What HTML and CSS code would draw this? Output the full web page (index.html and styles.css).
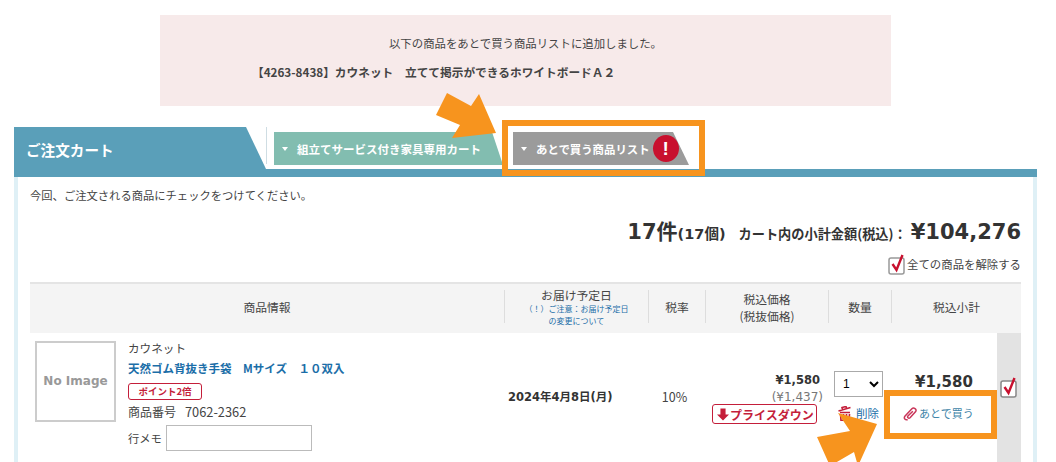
FILE: index.html
```html
<!DOCTYPE html>
<html lang="ja">
<head>
  <meta charset="UTF-8">
  <title>ご注文カート</title>
  <link rel="stylesheet" href="styles.css">
</head>
<body>
  <section class="notice">
    <p class="notice-main">以下の商品をあとで買う商品リストに追加しました。</p>
    <p class="notice-item">【4263-8438】カウネット　立てて掲示ができるホワイトボードＡ２</p>
  </section>

  <section class="cart">
    <div class="tabs">
      <h1 class="tab-title">ご注文カート</h1>
      <div class="tab-links">
        <a class="tab tab-green"><i class="caret"></i>組立てサービス付き家具専用カート</a>
        <a class="tab tab-gray"><i class="caret"></i>あとで買う商品リスト<b class="alert">!</b></a>
      </div>
    </div>

    <div class="panel">
      <p class="intro">今回、ご注文される商品にチェックをつけてください。</p>
      <div class="total">
        <span class="total-count">17件</span><span class="total-qty">(17個)</span>
        <span class="total-label">カート内の小計金額(税込)：</span>
        <span class="total-price">¥104,276</span>
      </div>
      <div class="release">
        <svg class="check-icon" viewBox="0 0 18 22"><rect x="1" y="5" width="15" height="16" rx="2" fill="#fff" stroke="#999" stroke-width="1.5"/><path d="M4.5 11 L8.5 17 L14.5 2" fill="none" stroke="#c8102e" stroke-width="2.4"/></svg>
        全ての商品を解除する
      </div>

      <table class="items">
        <colgroup>
          <col class="c-info"><col class="c-date"><col class="c-rate"><col class="c-price"><col class="c-qty"><col class="c-sub"><col class="c-check">
        </colgroup>
        <thead>
          <tr>
            <th><div class="th-in">商品情報</div></th>
            <th><div class="th-in">お届け予定日<a class="th-note">（！）ご注意：お届け予定日<br>の変更について</a></div></th>
            <th><div class="th-in">税率</div></th>
            <th><div class="th-in">税込価格<br>(税抜価格)</div></th>
            <th><div class="th-in">数量</div></th>
            <th colspan="2"><div class="th-in th-last">税込小計</div></th>
          </tr>
        </thead>
        <tbody>
          <tr>
            <td class="td-info">
              <div class="product">
                <div class="noimage">No Image</div>
                <div class="product-text">
                  <div class="maker">カウネット</div>
                  <a class="product-name">天然ゴム背抜き手袋　Mサイズ　１０双入</a>
                  <div><span class="point">ポイント2倍</span></div>
                  <div class="code">商品番号<span class="code-no">7062-2362</span></div>
                  <label class="memo">行メモ<input type="text"></label>
                </div>
              </div>
            </td>
            <td class="td-date">2024年4月8日(月)</td>
            <td class="td-rate">10%</td>
            <td class="td-price">
              <div class="price">¥1,580</div>
              <div class="price-ex">(¥1,437)</div>
              <span class="down">
                <svg viewBox="0 0 14 14"><path d="M4 0 H10 V7 H14 L7 14 L0 7 H4 Z" fill="#c41e3a"/></svg>プライスダウン
              </span>
            </td>
            <td class="td-qty">
              <select class="qty"><option>1</option></select>
              <a class="del">
                <svg viewBox="0 0 14 15"><path d="M0.5 5 L12.5 1.5 M4.5 3.5 L4 1.5 L8 .5 L8.5 2.5 M2 6.5 H12 M2.5 8 L3 14.5 H11 L11.5 8 M5.5 8 V14 M8.5 8 V14" fill="none" stroke="#c41e3a" stroke-width="1.6"/></svg>削除
              </a>
            </td>
            <td class="td-sub">
              <div class="sub-price">¥1,580</div>
              <a class="later">
                <svg viewBox="0 0 16 16"><path d="M5 14.5 C2.5 15.5 .5 13 2 11 L9.5 3 C11.5 1 15 3.5 13.5 6 L7.5 12.5 C6 14 4 12 5.5 10.5 L10.5 5.5" fill="none" stroke="#c9365a" stroke-width="1.6"/></svg>あとで買う
              </a>
            </td>
            <td class="td-check">
              <svg class="check-icon" viewBox="0 0 18 22"><rect x="1" y="5" width="15" height="16" rx="2" fill="#fff" stroke="#888" stroke-width="1.5"/><path d="M4.5 11 L8.5 17 L14.5 2" fill="none" stroke="#c8102e" stroke-width="2.4"/></svg>
            </td>
          </tr>
        </tbody>
      </table>
    </div>
  </section>

  <!-- 注釈（スクリーンショットに重ねた枠と矢印） -->
  <div class="mark mark-tab"></div>
  <div class="mark mark-later"></div>
  <svg class="arrows" viewBox="0 0 1056 462">
    <polygon points="447,93 471,106 479,94 496,133 452,138 460,125 436,115" fill="#f7941e"/>
    <polygon points="877,424 838,413 850,431 817,437 830,466 854,452 858,466" fill="#f7941e"/>
  </svg>
</body>
</html>
```

FILE: styles.css
```css
:root {
  --blue: #5a9fb9;
  --link: #1b6ea8;
  --red: #c41e3a;
  --orange: #f7941e;
  --text: #444;
}
* { box-sizing: border-box; margin: 0; padding: 0; }
html, body { height: 462px; overflow: hidden; }
body {
  position: relative;
  font-family: "Noto Sans CJK JP", "Noto Sans", sans-serif;
  font-size: 12px;
  color: var(--text);
  background: #fff;
}

/* notice */
.notice {
  width: 731px;
  height: 91px;
  margin: 15px 0 0 160px;
  padding-top: 19px;
  background: #f7eaea;
}
.notice-main { text-align: center; font-size: 11.4px; line-height: 18px; }
.notice-item { margin: 11px 0 0 92px; font-size: 11.7px; line-height: 18px; font-weight: 700; }

/* tabs */
.cart { width: 1023px; margin: 21px 0 0 14px; }
.tabs { display: flex; height: 50px; border-bottom: 8px solid var(--blue); }
.tab-title {
  width: 252px;
  padding: 14px 0 0 12px;
  background: var(--blue);
  color: #fff;
  font-size: 14.6px;
  line-height: 18px;
  font-weight: 700;
  clip-path: polygon(0 0, 232px 0, 100% 100%, 0 100%);
}
.tab-links { display: flex; flex: 1; padding: 5px 0 0 7px; border-left: 1px solid #cfdde3; height: 37px; }
.tab {
  display: flex;
  align-items: center;
  height: 33px;
  color: #fff;
  font-weight: 700;
}
.tab-green {
  width: 229px;
  padding-left: 8px;
  font-size: 11.5px;
  background: #82bdb0;
  clip-path: polygon(0 0, 218px 0, 100% 100%, 0 100%);
}
.tab-gray {
  width: 176px;
  margin-left: 10px;
  padding-left: 8px;
  font-size: 11.4px;
  background: #9b9b9b;
  clip-path: polygon(0 0, 160px 0, 100% 100%, 0 100%);
}
.caret {
  width: 0;
  height: 0;
  margin-right: 9px;
  border: 3px solid transparent;
  border-top: 4px solid #fff;
  border-bottom: 0;
}
.alert {
  width: 26px;
  height: 27px;
  margin-left: 3px;
  border-radius: 50%;
  background: #c8102e;
  font: 700 19px/27px "Liberation Sans", sans-serif;
  text-align: center;
}

/* panel */
.panel {
  height: 300px;
  padding: 9px 12px 0;
  border-left: 4px solid #dff0f6;
  border-right: 4px solid #dff0f6;
}
.intro { font-size: 11.3px; line-height: 18px; }
.total {
  display: flex;
  justify-content: flex-end;
  align-items: baseline;
  margin-top: 11px;
  height: 37px;
  color: #333;
  font-family: "DejaVu Sans", "Noto Sans CJK JP", sans-serif;
  font-weight: 700;
}
.total-count { font-size: 21px; }
.total-qty { font-size: 14.5px; margin-right: 13px; }
.total-label { font-family: "Noto Sans CJK JP", sans-serif; font-size: 13.2px; margin-right: 4px; }
.total-price { font-size: 21px; }
.release {
  display: flex;
  justify-content: flex-end;
  align-items: center;
  height: 24px;
  font-size: 11.4px;
}
.check-icon { width: 18px; height: 22px; margin-right: 1px; }

/* table */
.items { width: 991px; margin-top: 6px; table-layout: fixed; border-collapse: collapse; }
.c-info { width: 474px; }
.c-date { width: 144px; }
.c-rate { width: 57px; }
.c-price { width: 123px; }
.c-qty { width: 63px; }
.c-sub { width: 106px; }
.c-check { width: 24px; }
th {
  height: 50px;
  padding: 6px 0 10px;
  background: #f4f4f4;
  border-top: 2px solid #e4e4e4;
  font-size: 11.8px;
  font-weight: 400;
  line-height: 17px;
}
.th-in { display: flex; flex-direction: column; justify-content: center; height: 33px; border-left: 1px solid #ddd; }
th:first-child .th-in { border-left: 0; }
.th-note { display: block; font-size: 8px; line-height: 12px; color: var(--link); }
td { height: 140px; vertical-align: top; }

.product { display: flex; padding: 8px 0 0 5px; }
.noimage {
  width: 81px;
  height: 81px;
  border: 2px solid #ccc;
  color: #999;
  font: 700 12px/77px "DejaVu Sans", sans-serif;
  text-align: center;
}
.product-text { margin-left: 12px; }
.maker { font-size: 11.6px; line-height: 16px; margin-top: -1px; }
.product-name { display: block; margin-top: 4px; line-height: 16px; color: var(--link); font-size: 11.5px; font-weight: 700; }
.point {
  display: inline-block;
  margin-top: 7px;
  width: 74px;
  height: 17px;
  border: 1.5px solid var(--red);
  border-radius: 3px;
  color: var(--red);
  font-size: 9.5px;
  font-weight: 700;
  line-height: 14px;
  text-align: center;
  vertical-align: top;
}
.code { margin-top: 3px; line-height: 18px; }
.code-no { margin-left: 9px; font-size: 12.8px; }
.memo { display: flex; align-items: center; margin-top: 4px; font-size: 11.3px; }
.memo input { width: 146px; height: 26px; margin-left: 4px; border: 1.5px solid #bbb; background: #fff; }

.td-date { padding: 55px 0 0 4px; font-family: "DejaVu Sans", "Noto Sans CJK JP", sans-serif; font-size: 11.5px; font-weight: 700; color: #333; }
.td-rate { padding: 54px 4px 0 0; text-align: center; font-size: 12.5px; }
.td-price { padding: 38px 8px 0 0; text-align: right; }
.price { font: 700 11.5px/18px "DejaVu Sans", sans-serif; color: #333; }
.price-ex { font: 12px/16px "DejaVu Sans", sans-serif; color: #777; margin-right: -3px; }
.down {
  display: inline-flex;
  align-items: center;
  width: 105px;
  height: 20px;
  margin: -1px 3px 0 0;
  padding-left: 4px;
  border: 1.5px solid var(--red);
  border-radius: 3px;
  color: var(--red);
  font-size: 12px;
  font-weight: 700;
  white-space: nowrap;
}
.down svg { width: 12px; height: 13px; margin-right: 1px; }
.td-qty { padding: 38px 0 0 6px; }
.qty { width: 49px; height: 26px; padding-left: 4px; border: 1.5px solid #aaa; background: #fff; font-size: 12px; font-family: "Liberation Sans", sans-serif; }
.del { display: flex; align-items: center; margin: 8px 0 0 4px; color: var(--link); font-size: 11.5px; white-space: nowrap; }
.del svg { width: 14px; height: 15px; margin-right: 4px; }
.td-sub { padding-top: 38px; }
.sub-price { font: 700 15px/22px "DejaVu Sans", sans-serif; color: #333; text-align: center; }
.later { display: flex; align-items: center; margin: 12px 0 0 12px; color: #3e84a8; font-size: 11px; white-space: nowrap; }
.later svg { width: 15px; height: 15px; margin-right: 1px; }
.td-check { padding: 43px 0 0 3px; background: #e3e3e3; }

/* annotations */
.mark { position: absolute; border: 6px solid var(--orange); }
.mark-tab { left: 502px; top: 120px; width: 203px; height: 56px; }
.mark-later { left: 884px; top: 390px; width: 113px; height: 49px; }
.arrows { position: absolute; left: 0; top: 0; width: 1056px; height: 462px; }
```
